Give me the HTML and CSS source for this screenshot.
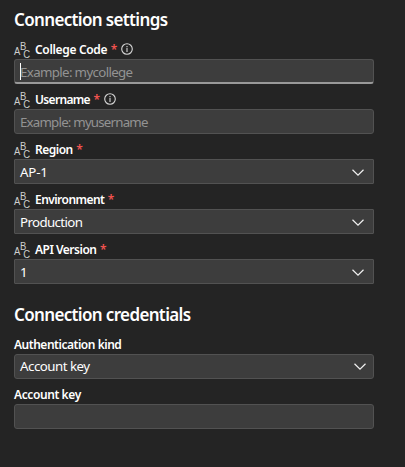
FILE: index.html
```html
<!DOCTYPE html>
<html lang="en">
<head>
<meta charset="utf-8">
<title>Connection settings</title>
<link rel="stylesheet" href="styles.css">
</head>
<body>
<svg class="defs" aria-hidden="true">
  <symbol id="abc" viewBox="0 0 16 16" overflow="visible"><g transform="scale(0.86 1)"><text x="0" y="12.6">A</text><text x="7" y="8">B</text><text x="10.7" y="16">C</text></g></symbol>
  <symbol id="info" viewBox="0 0 12 12"><circle cx="6" cy="6" r="5.3"/><path d="M6 5v4M6 3v1.2"/></symbol>
  <symbol id="chevron" viewBox="0 0 12 7"><path d="M0.5 0.7L6 6.1L11.5 0.7"/></symbol>
</svg>
<main class="panel">
  <h2 class="title">Connection settings</h2>
  <div class="field">
    <div class="label"><svg class="abc"><use href="#abc"/></svg><span class="college">College Code</span><span class="req">*</span><svg class="info"><use href="#info"/></svg></div>
    <div class="box active"><span class="hint mycollege">Example: mycollege</span></div>
  </div>
  <div class="field">
    <div class="label"><svg class="abc"><use href="#abc"/></svg><span class="username">Username</span><span class="req">*</span><svg class="info"><use href="#info"/></svg></div>
    <div class="box"><span class="hint myusername">Example: myusername</span></div>
  </div>
  <div class="field">
    <div class="label"><svg class="abc"><use href="#abc"/></svg><span class="region">Region</span><span class="req">*</span></div>
    <div class="box select"><span class="ap">AP-1</span><svg class="chevron"><use href="#chevron"/></svg></div>
  </div>
  <div class="field">
    <div class="label"><svg class="abc"><use href="#abc"/></svg><span class="environment">Environment</span><span class="req">*</span></div>
    <div class="box select"><span class="production">Production</span><svg class="chevron"><use href="#chevron"/></svg></div>
  </div>
  <div class="field">
    <div class="label"><svg class="abc"><use href="#abc"/></svg><span class="version">API Version</span><span class="req">*</span></div>
    <div class="box select"><span>1</span><svg class="chevron"><use href="#chevron"/></svg></div>
  </div>
  <h2 class="title credentials">Connection credentials</h2>
  <div class="field">
    <div class="label"><span class="authentication">Authentication kind</span></div>
    <div class="box kind"><span class="account">Account key</span><svg class="chevron"><use href="#chevron"/></svg></div>
  </div>
  <div class="field">
    <div class="label"><span class="key">Account key</span></div>
    <div class="box"></div>
  </div>
</main>
</body>
</html>
```
FILE: styles.css
```css
* { box-sizing: border-box; }
html { background: #242424; }
body { margin: 0; height: 467px; overflow: hidden; color: #fff; font-family: "Noto Sans", "Open Sans", sans-serif; }
.defs { position: absolute; width: 0; height: 0; }
.panel { width: 374px; padding: 7px 0 0 14px; }
.title { margin: 0 0 7px; height: 25px; font-size: 17px; line-height: 25px; font-weight: 600; letter-spacing: -0.65px; white-space: nowrap; }
.credentials { margin-top: 13px; }
.field { height: 50px; }
.label { display: flex; align-items: center; height: 20px; padding-top: 1px; font-size: 12px; font-weight: 600; line-height: 19px; letter-spacing: -0.4px; white-space: nowrap; }
.college { letter-spacing: -0.33px; }
.username { letter-spacing: -0.67px; }
.region { letter-spacing: -0.5px; }
.environment { letter-spacing: -0.55px; }
.version { letter-spacing: -0.5px; }
.authentication { letter-spacing: -0.47px; }
.box { display: flex; align-items: center; height: 25px; padding: 1px 9px 0 5px; border: 1px solid #525252; border-radius: 3px; background: #3d3d3d; font-size: 13.3px; letter-spacing: -0.5px; line-height: 22px; white-space: nowrap; }
.mycollege { letter-spacing: -0.65px; }
.myusername { letter-spacing: -0.8px; }
.ap { letter-spacing: -0.2px; }
.production { letter-spacing: -0.63px; }
.select { border-radius: 1px; }
.kind { padding: 0 7px 1px 5px; }
.active { border-bottom: 2px solid #999; }
.active::before { content: ""; width: 1px; height: 17px; margin-right: -1px; background: #fff; }
.hint { color: #939393; }
.req { width: 5px; margin-left: 3.5px; color: #f1534f; }
.abc { width: 16px; height: 16px; margin-right: 5px; overflow: visible; fill: #cfcfcf; font: 400 11px "Liberation Sans", sans-serif; letter-spacing: 0; }
.info { width: 12px; height: 12px; margin: 0 0 2px 5.5px; fill: none; stroke: #d6d6d6; stroke-width: 1.1; }
.chevron { width: 12px; height: 7px; margin-left: auto; fill: none; stroke: #f2f2f2; stroke-width: 1.2; }
```
